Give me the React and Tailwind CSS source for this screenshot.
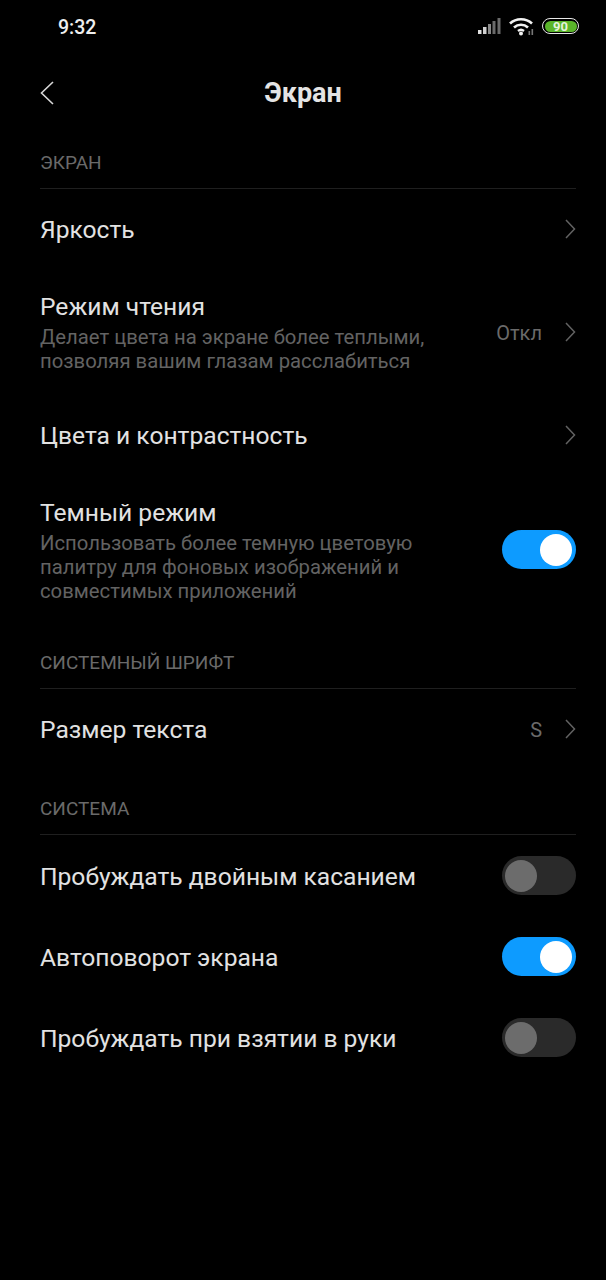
import React from 'react'

const Chevron = () => (
  <svg width="12" height="22" viewBox="0 0 12 22" fill="none" className="shrink-0 -mt-[2px]">
    <path d="M2 2 L10.5 11 L2 20" stroke="#626262" strokeWidth="1.5" />
  </svg>
)

const Toggle = ({ on }) => (
  <div className={`w-[74px] h-[39px] -mt-[2px] rounded-full flex items-center shrink-0 ${on ? 'bg-[#0d9bff] justify-end pr-[4px]' : 'bg-[#2a2a2a] justify-start pl-[3px]'}`}>
    <div className={`w-[32px] h-[32px] rounded-full ${on ? 'bg-white' : 'bg-[#6c6c6c]'}`} />
  </div>
)

const SectionHeader = ({ label }) => (
  <div className="h-[64px] ml-[40px] mr-[30px] flex items-end pb-[13px] border-b border-[#1f1f1f] text-[19px] leading-[24px] text-[#6a6a6a]">
    {label}
  </div>
)

const Row = ({ title, desc, value, right, tall }) => (
  <div className={`pr-[30px] pl-[40px] flex items-center justify-between ${desc ? 'py-[22px]' : tall ? 'h-[82px]' : 'h-[81px]'}`}>
    <div className="flex flex-col">
      <div className="text-[24.6px] leading-[30px] text-[#e2e2e2]">{title}</div>
      {desc && (
        <div className="text-[20.3px] leading-[24px] text-[#636363] mt-[3px]">
          {desc.map((line) => <div key={line}>{line}</div>)}
        </div>
      )}
    </div>
    <div className="flex items-center">
      {value && <span className="text-[20px] text-[#6a6a6a] mr-[22px]">{value}</span>}
      {right}
    </div>
  </div>
)

const StatusIcons = () => (
  <div className="flex items-center gap-[8px] pb-[2px]">
    <svg width="23" height="16" viewBox="0 0 23 16">
      <rect x="0" y="12" width="3.5" height="4" fill="#e0e0e0" />
      <rect x="5" y="9" width="3.5" height="7" fill="#d0d0d0" />
      <rect x="10" y="6" width="3" height="10" fill="#8a8a8a" />
      <rect x="14.5" y="3" width="3" height="13" fill="#6a6a6a" />
      <rect x="19.5" y="0" width="3" height="16" fill="#6a6a6a" />
    </svg>
    <svg width="25" height="19" viewBox="0 0 25 19" fill="none">
      <path d="M1 6.5 C7 0.8 17 0.8 23 6.5" stroke="#f2f2f2" strokeWidth="2.6" />
      <path d="M5 10.5 C9 6.8 15 6.8 19 10.5" stroke="#f2f2f2" strokeWidth="2.6" />
      <path d="M9 14 C11 12.4 13 12.4 15 14" stroke="#f2f2f2" strokeWidth="2.4" />
      <circle cx="12" cy="16.5" r="2" fill="#f2f2f2" />
      <rect x="19.5" y="14" width="1.6" height="4" fill="#777" />
      <rect x="22.5" y="12" width="1.6" height="6" fill="#777" />
    </svg>
    <div className="w-[37px] h-[16px] rounded-full border-[1.5px] border-[#e8e8e8] p-[1.5px] flex">
      <div className="flex-1 rounded-full bg-[#5ab52a] flex items-center justify-center text-[13px] leading-none font-bold text-[#e6f3dc]">90</div>
    </div>
  </div>
)

export default function App() {
  return (
    <div className="w-[606px] h-[1280px] bg-black overflow-hidden font-['Roboto',sans-serif]">
      {/* Status bar */}
      <div className="h-[54px] pl-[58px] pr-[27px] flex items-center justify-between">
        <span className="text-[19.5px] font-medium text-[#eeeeee] pt-[1px]">9:32</span>
        <StatusIcons />
      </div>

      {/* Title */}
      <div className="h-[71px] pt-[7px] px-[40px] flex items-center justify-between">
        <svg width="14" height="24" viewBox="0 0 14 24" fill="none">
          <path d="M13 1 L1.5 12 L13 23" stroke="#d8d8d8" strokeWidth="1.6" />
        </svg>
        <span className="text-[27px] font-bold text-[#e4e4e4]">Экран</span>
        <span className="w-[14px]" />
      </div>

      <SectionHeader label="ЭКРАН" />
      <Row title="Яркость" right={<Chevron />} />
      <Row
        title="Режим чтения"
        desc={['Делает цвета на экране более теплыми,', 'позволяя вашим глазам расслабиться']}
        value="Откл"
        right={<Chevron />}
      />
      <Row title="Цвета и контрастность" right={<Chevron />} />
      <Row
        title="Темный режим"
        desc={['Использовать более темную цветовую', 'палитру для фоновых изображений и', 'совместимых приложений']}
        right={<Toggle on />}
      />

      <SectionHeader label="СИСТЕМНЫЙ ШРИФТ" />
      <Row title="Размер текста" value="S" right={<Chevron />} tall />

      <SectionHeader label="СИСТЕМА" />
      <div className="mt-[1px]">
        <Row title="Пробуждать двойным касанием" right={<Toggle />} />
        <Row title="Автоповорот экрана" right={<Toggle on />} />
        <Row title="Пробуждать при взятии в руки" right={<Toggle />} />
      </div>
    </div>
  )
}
